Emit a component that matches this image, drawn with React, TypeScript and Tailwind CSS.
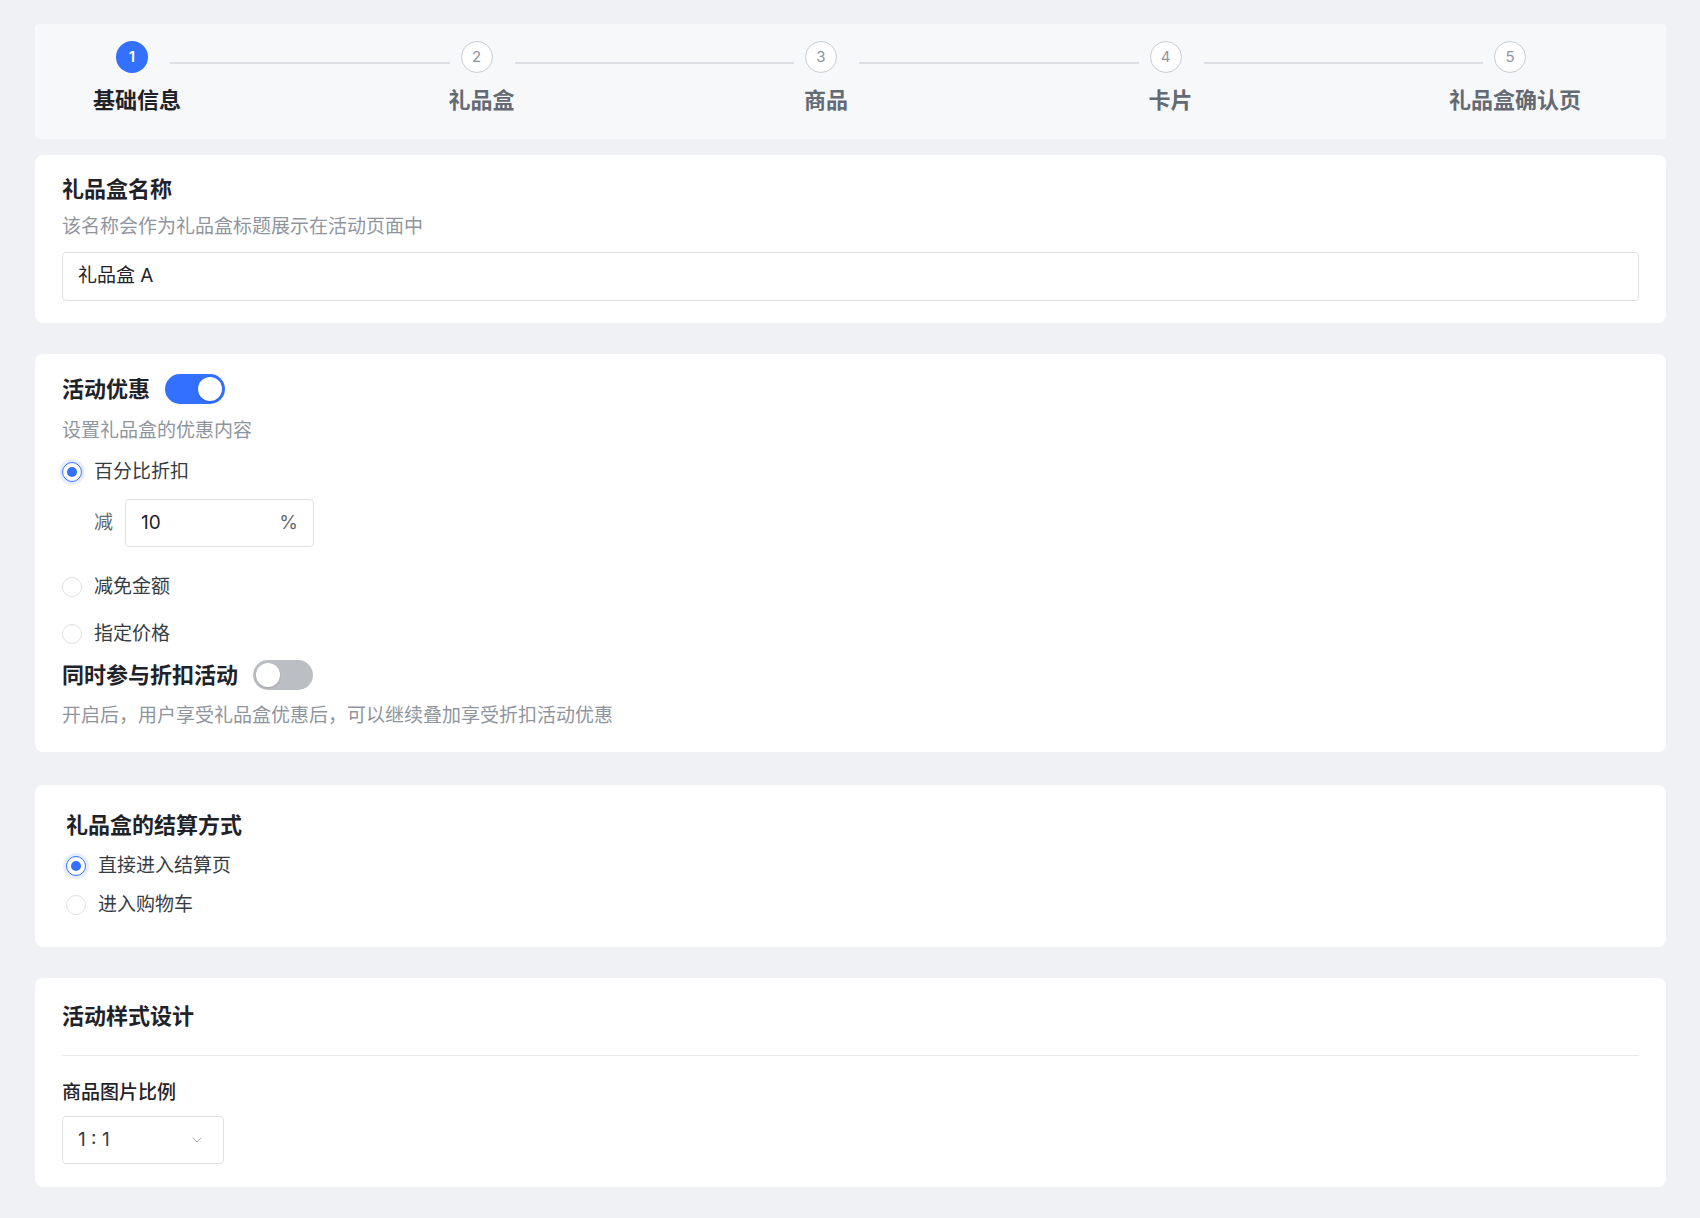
import { ChevronDown } from "lucide-react";

const steps = ["基础信息", "礼品盒", "商品", "卡片", "礼品盒确认页"];

const Toggle = ({ on }: { on: boolean }) => (
  <div
    className={`w-[60px] h-[30px] rounded-full p-[3px] flex items-center ${
      on ? "bg-[#3370ff] justify-end" : "bg-[#bbbfc4] justify-start"
    }`}
  >
    <div className="w-[24px] h-[24px] rounded-full bg-white shadow-[0_1px_2px_rgba(0,0,0,0.15)]" />
  </div>
);

const Radio = ({ checked, label }: { checked: boolean; label: string }) => (
  <div className="flex items-center h-[27px]">
    <div
      className={`w-[20px] h-[20px] rounded-full flex items-center justify-center bg-white ${
        checked
          ? "border-[1.5px] border-[#3370ff] shadow-[0_0_0_3px_rgba(51,112,255,0.12)]"
          : "border border-[#dee0e3]"
      }`}
    >
      {checked && <div className="w-[10px] h-[10px] rounded-full bg-[#3370ff]" />}
    </div>
    <span className="ml-[12px] text-[19px] leading-[27px] text-[#373c43]">{label}</span>
  </div>
);

const Stepper = () => (
  <div className="bg-[#f7f8fa] rounded-[4px] pt-[17px] pb-[24px] pl-[81px] pr-[140px]">
    <div className="flex items-center">
      {steps.map((s, i) => (
        <div key={s} className={`flex items-center ${i < steps.length - 1 ? "flex-1" : ""}`}>
          {i === 0 ? (
            <div className="w-[32px] h-[32px] rounded-full bg-[#3370ff] text-white text-[15px] font-semibold flex items-center justify-center shrink-0">
              {i + 1}
            </div>
          ) : (
            <div className="w-[32px] h-[32px] rounded-full bg-white border-[1.5px] border-[#c9cdd4] text-[#8f959e] text-[15px] flex items-center justify-center shrink-0">
              {i + 1}
            </div>
          )}
          {i < steps.length - 1 && (
            <div className="flex-1 h-[1.5px] bg-[#dcdee3] ml-[22px] mr-[11px] mt-[12px]" />
          )}
        </div>
      ))}
    </div>
    <div className="flex mt-[12px]">
      {steps.map((s, i) => (
        <div key={s} className={`flex ${i < steps.length - 1 ? "flex-1" : ""}`}>
          <div className="w-[32px] flex justify-center whitespace-nowrap">
            <span
              className={`text-[22px] leading-[30px] font-bold pl-[10px] ${
                i === 0 ? "text-[#1f2329]" : "text-[#646a73]"
              }`}
            >
              {s}
            </span>
          </div>
        </div>
      ))}
    </div>
  </div>
);

export default function App() {
  return (
    <div className="min-h-[1218px] bg-[#f0f1f5] pt-[24px] pb-[34px] pl-[35px] pr-[34px] font-['Inter','Noto_Sans_CJK_SC',sans-serif]">
      <Stepper />

      {/* 名称 */}
      <div className="mt-[16px] bg-white rounded-[8px] pt-[19px] pb-[22px] px-[27px]">
        <div className="text-[22px] leading-[30px] font-semibold text-[#1f2329]">礼品盒名称</div>
        <div className="mt-[9px] text-[19px] leading-[27px] text-[#8f959e]">
          该名称会作为礼品盒标题展示在活动页面中
        </div>
        <div className="mt-[12px] h-[49px] border border-[#dee0e3] rounded-[4px] px-[15px] flex items-center text-[19px] text-[#1f2329]">
          礼品盒 A
        </div>
      </div>

      {/* 活动优惠 */}
      <div className="mt-[31px] bg-white rounded-[8px] pt-[20px] pb-[23px] px-[27px]">
        <div className="flex items-center h-[30px]">
          <span className="text-[22px] leading-[30px] font-semibold text-[#1f2329]">活动优惠</span>
          <div className="ml-[15px]">
            <Toggle on />
          </div>
        </div>
        <div className="mt-[13px] text-[19px] leading-[27px] text-[#8f959e]">设置礼品盒的优惠内容</div>
        <div className="mt-[14px]">
          <Radio checked label="百分比折扣" />
        </div>
        <div className="mt-[14px] flex items-center pl-[32px]">
          <span className="text-[19px] text-[#646a73]">减</span>
          <div className="ml-[12px] w-[189px] h-[48px] border border-[#dee0e3] rounded-[4px] px-[15px] flex items-center justify-between text-[19px] text-[#1f2329]">
            <span>10</span>
            <span className="text-[#646a73]">%</span>
          </div>
        </div>
        <div className="mt-[26px]">
          <Radio checked={false} label="减免金额" />
        </div>
        <div className="mt-[20px]">
          <Radio checked={false} label="指定价格" />
        </div>
        <div className="mt-[13px] flex items-center h-[30px]">
          <span className="text-[22px] leading-[30px] font-semibold text-[#1f2329]">同时参与折扣活动</span>
          <div className="ml-[15px]">
            <Toggle on={false} />
          </div>
        </div>
        <div className="mt-[12px] text-[19px] leading-[27px] text-[#8f959e]">
          开启后，用户享受礼品盒优惠后，可以继续叠加享受折扣活动优惠
        </div>
      </div>

      {/* 结算方式 */}
      <div className="mt-[33px] bg-white rounded-[8px] pt-[25px] pb-[29px] pl-[31px] pr-[27px]">
        <div className="text-[22px] leading-[30px] font-semibold text-[#1f2329]">礼品盒的结算方式</div>
        <div className="mt-[12px]">
          <Radio checked label="直接进入结算页" />
        </div>
        <div className="mt-[12px]">
          <Radio checked={false} label="进入购物车" />
        </div>
      </div>

      {/* 样式设计 */}
      <div className="mt-[31px] bg-white rounded-[8px] pt-[23px] pb-[23px] px-[27px]">
        <div className="text-[22px] leading-[30px] font-semibold text-[#1f2329]">活动样式设计</div>
        <div className="mt-[24px] h-px bg-[#e8e9eb]" />
        <div className="mt-[23px] text-[19px] leading-[27px] font-medium text-[#1f2329]">商品图片比例</div>
        <div className="mt-[10px] w-[162px] h-[48px] border border-[#dee0e3] rounded-[4px] pl-[15px] pr-[18px] flex items-center justify-between">
          <span className="text-[19px] text-[#373c43]">1 : 1</span>
          <ChevronDown size={16} strokeWidth={1.5} className="text-[#a8adb4]" />
        </div>
      </div>
    </div>
  );
}
